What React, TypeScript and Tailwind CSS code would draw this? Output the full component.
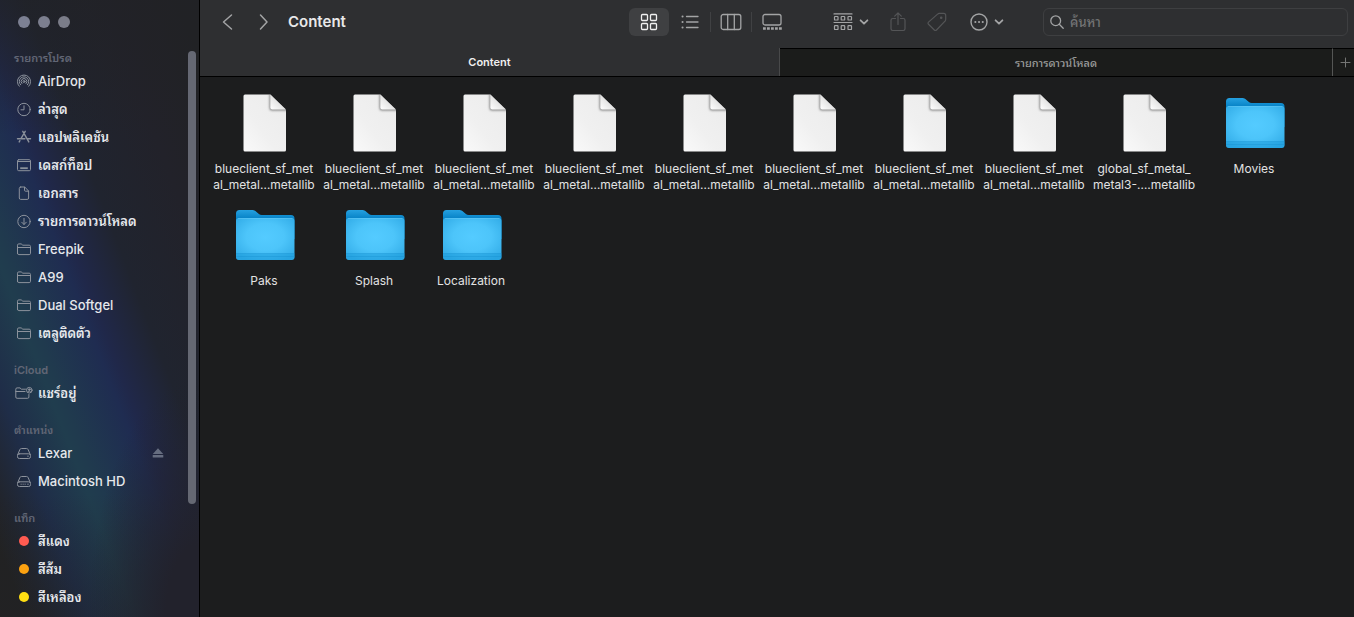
import type { ReactNode } from "react";

const stroke = {
  fill: "none",
  stroke: "currentColor",
  strokeLinecap: "round",
  strokeLinejoin: "round",
} as const;

function Glyph({ children }: { children: ReactNode }) {
  return (
    <svg width="16" height="16" viewBox="0 0 16 16" strokeWidth="1" {...stroke} aria-hidden="true">
      {children}
    </svg>
  );
}

const airdrop = (
  <Glyph>
    <path d="M3.2 13.2A6.6 6.6 0 1 1 12.8 13.2" />
    <path d="M4.6 11.8A4.7 4.7 0 1 1 11.4 11.8" />
    <path d="M5.9 10.5A2.9 2.9 0 1 1 10.1 10.5" />
    <circle cx="8" cy="8.5" r="1" />
  </Glyph>
);

const clock = (
  <Glyph>
    <circle cx="8" cy="8.5" r="6.2" />
    <path d="M8 4.8v4H5" />
  </Glyph>
);

const apps = (
  <Glyph>
    <g strokeWidth="1.4">
      <path d="M6.8 2.3l6 10.6M9.2 2.3L5.1 9.3M1.5 9.7h7.4M11.5 9.7h3M3.2 12.9l.7-1.2" />
    </g>
  </Glyph>
);

const desktop = (
  <Glyph>
    <rect x="1.5" y="2.7" width="13" height="11" rx="1.2" />
    <path d="M1.5 4.5h13" />
    <path d="M4.2 11.2h7.6" strokeWidth="1.8" strokeLinecap="butt" />
  </Glyph>
);

const documentIcon = (
  <Glyph>
    <path d="M4.7 2h4l3.9 4v7a1.4 1.4 0 0 1-1.4 1.4H4.7A1.4 1.4 0 0 1 3.3 13V3.4A1.4 1.4 0 0 1 4.7 2z" />
    <path d="M8.5 2.2v3a1 1 0 0 0 1 1h3" />
  </Glyph>
);

const downloads = (
  <Glyph>
    <circle cx="8" cy="8.5" r="6.2" />
    <path d="M8 5.3v6M5.7 9.2L8 11.5l2.3-2.3" />
  </Glyph>
);

const folder = (
  <Glyph>
    <path d="M1.5 12.3V4.2a1.3 1.3 0 0 1 1.3-1.3h2.4l1.6 1.3h6.4a1.3 1.3 0 0 1 1.3 1.3v6.8a1.3 1.3 0 0 1-1.3 1.3H2.8a1.3 1.3 0 0 1-1.3-1.3z" />
    <path d="M1.5 6.5h13" />
  </Glyph>
);

const shared = (
  <svg width="18" height="16" viewBox="0 0 18 16" strokeWidth="1" {...stroke} aria-hidden="true">
    <path d="M10.5 4.2H6.4L5 2.9H2.1A1.3 1.3 0 0 0 .8 4.2V12a1.3 1.3 0 0 0 1.3 1.3h10.5a1.3 1.3 0 0 0 1.3-1.3V9.5M.8 6.5H10" />
    <circle cx="14.3" cy="5.2" r="2.8" />
    <circle cx="14.3" cy="4.6" r=".8" fill="currentColor" />
    <path d="M12.9 7a1.5 1.5 0 0 1 2.8 0" />
  </svg>
);

const drive = (
  <Glyph>
    <path d="M1.7 9.7l2.1-5A1.8 1.8 0 0 1 5.5 3.5h5a1.8 1.8 0 0 1 1.7 1.2l2.1 5" />
    <rect x="1.5" y="8.8" width="13" height="4.7" rx="1.8" />
    <path d="M11.7 11.2h.6" />
  </Glyph>
);

const internalDrive = (
  <Glyph>
    <path d="M1.7 9.7l2.1-5A1.8 1.8 0 0 1 5.5 3.5h5a1.8 1.8 0 0 1 1.7 1.2l2.1 5" />
    <rect x="1.5" y="8.8" width="13" height="4.7" rx="1.8" />
    <path d="M5 11.2h.3M7 11.2h.3M9 11.2h.3M11.7 11.2h.6" />
  </Glyph>
);

type Entry = { label: string; icon: ReactNode; eject?: boolean };

const sections: { title: string; entries: Entry[] }[] = [
  {
    title: "รายการโปรด",
    entries: [
      { label: "AirDrop", icon: airdrop },
      { label: "ล่าสุด", icon: clock },
      { label: "แอปพลิเคชัน", icon: apps },
      { label: "เดสก์ท็อป", icon: desktop },
      { label: "เอกสาร", icon: documentIcon },
      { label: "รายการดาวน์โหลด", icon: downloads },
      { label: "Freepik", icon: folder },
      { label: "A99", icon: folder },
      { label: "Dual Softgel", icon: folder },
      { label: "เตลูติดตัว", icon: folder },
    ],
  },
  { title: "iCloud", entries: [{ label: "แชร์อยู่", icon: shared }] },
  {
    title: "ตำแหน่ง",
    entries: [
      { label: "Lexar", icon: drive, eject: true },
      { label: "Macintosh HD", icon: internalDrive },
    ],
  },
  {
    title: "แท็ก",
    entries: [
      { label: "สีแดง", icon: <span className="size-2.5 rounded-full bg-[#ff5b51]" /> },
      { label: "สีส้ม", icon: <span className="size-2.5 rounded-full bg-[#fca211]" /> },
      { label: "สีเหลือง", icon: <span className="size-2.5 rounded-full bg-[#ffdf12]" /> },
    ],
  },
];

function Sidebar() {
  return (
    <aside className="relative w-[200px] shrink-0 border-r border-black bg-[#22232a] bg-[radial-gradient(ellipse_110px_240px_at_100%_100%,#22222cff_30%,#22222c00_100%),linear-gradient(180deg,#212226aa_0%,#21222600_22%,#21222600_80%,#21222666_100%),linear-gradient(69deg,#222222_6%,#21252e_11%,#1f2d48_20%,#203d4e_31%,#203a4e_34%,#1f2c51_46%,#20284a_49%,#20242f_60%,#22222a_78%,#212224_95%)]">
      <div className="flex gap-2 px-[18px] pt-4 pb-[22px]">
        <button aria-label="Close" className="size-3 rounded-full bg-[#7c8093]" />
        <button aria-label="Minimize" className="size-3 rounded-full bg-[#7c7f8f]" />
        <button aria-label="Zoom" className="size-3 rounded-full bg-[#7b7d89]" />
      </div>

      <nav className="flex flex-col gap-4">
        {sections.map((section) => (
          <section key={section.title}>
            <h2 className="h-[17px] pl-3.5 text-[11px] leading-4 font-semibold text-[#616675]">
              {section.title}
            </h2>
            <ul className="-mb-px">
              {section.entries.map((entry) => (
                <li key={entry.label} className="flex h-7 items-center pr-[35px] pl-3.5">
                  <a
                    href="#"
                    lang={/[a-z]/i.test(entry.label) ? "en" : "th"}
                    className="flex flex-1 items-center gap-1 text-[13px] leading-5 font-medium whitespace-nowrap text-[#e6e8ec] [&:lang(th)]:font-semibold"
                  >
                    <span className="flex w-5 shrink-0 justify-center text-[#8c929c]">{entry.icon}</span>
                    {entry.label}
                  </a>
                  {entry.eject && (
                    <button aria-label="Eject" className="text-[#666d80]">
                      <svg width="12" height="12" viewBox="0 0 12 12" fill="currentColor" aria-hidden="true">
                        <path d="M6 1.3L11.2 7H.8z" />
                        <rect x=".7" y="8" width="10.6" height="2.5" rx=".5" />
                      </svg>
                    </button>
                  )}
                </li>
              ))}
            </ul>
          </section>
        ))}
      </nav>

      <div className="absolute top-[51px] right-[3px] h-[453px] w-2 rounded-full bg-[#656873]" />
    </aside>
  );
}

function Caret() {
  return (
    <svg width="10" height="8" viewBox="0 0 10 8" strokeWidth="1.8" {...stroke} aria-hidden="true">
      <path d="M1.6 2.3L5 5.7l3.4-3.4" />
    </svg>
  );
}

function Toolbar() {
  return (
    <header className="flex h-12 items-center bg-[#2e2f31] pr-1.5 pb-1 text-[#a3a4a5]">
      <div className="flex flex-1 items-center pl-5">
        <button aria-label="Back" className="flex w-4 justify-center">
          <svg width="12" height="18" viewBox="0 0 12 18" strokeWidth="1.5" {...stroke}>
            <path d="M9.5 2L1.5 9l8 7" />
          </svg>
        </button>
        <button aria-label="Forward" className="ml-5 flex w-4 justify-center">
          <svg width="12" height="18" viewBox="0 0 12 18" strokeWidth="1.5" {...stroke}>
            <path d="M2.5 2L9 9l-6.500 7" />
          </svg>
        </button>
        <h1 className="ml-4 text-[15px] leading-5 font-semibold text-[#e8e8e9]">Content</h1>
      </div>

      <div className="flex items-center">
        <button aria-label="Icons" className="flex h-7 w-10 items-center justify-center rounded-md bg-[#3f4042] text-[#f0f0f0]">
          <svg width="18" height="18" viewBox="0 0 18 18" strokeWidth="1.3" {...stroke}>
            <rect x="1.5" y="1.5" width="6" height="6" rx="1" />
            <rect x="10.5" y="1.5" width="6" height="6" rx="1" />
            <rect x="1.5" y="10.5" width="6" height="6" rx="1" />
            <rect x="10.5" y="10.5" width="6" height="6" rx="1" />
          </svg>
        </button>
        <span className="w-px" />
        <button aria-label="List" className="flex h-7 w-10 items-center justify-center">
          <svg width="18" height="16" viewBox="0 0 18 16" strokeWidth="1.3" {...stroke}>
            <path d="M5.5 2.5H17M5.5 8H17M5.5 13.5H17" />
            <path d="M1.5 2.5h.1M1.5 8h.1M1.5 13.5h.1" strokeWidth="2" />
          </svg>
        </button>
        <span className="h-5 w-px bg-[#404143]" />
        <button aria-label="Columns" className="flex h-7 w-10 items-center justify-center">
          <svg width="22" height="18" viewBox="0 0 22 18" strokeWidth="1.3" {...stroke}>
            <rect x="1.2" y="1.5" width="19.6" height="15" rx="2" />
            <path d="M7.7 1.5v15M14.3 1.5v15" />
          </svg>
        </button>
        <span className="h-5 w-px bg-[#404143]" />
        <button aria-label="Gallery" className="flex h-7 w-10 items-center justify-center">
          <svg width="20" height="18" viewBox="0 0 20 18" strokeWidth="1.3" {...stroke}>
            <rect x="1" y="1.5" width="18" height="10.5" rx="2" />
            <path d="M1 15.5h19" strokeWidth="2.5" strokeDasharray="2.8 1.2" strokeLinecap="butt" />
          </svg>
        </button>
      </div>

      <div className="flex items-center gap-[19px] pr-[35px] pl-[41px]">
        <button aria-label="Group" className="flex w-9 items-center justify-between">
          <svg width="20" height="18" viewBox="0 0 20 18" strokeWidth="1.2" {...stroke}>
            <path d="M1 .9h18M1 9.5h18" />
            <rect x="1.5" y="3.5" width="3.5" height="3.5" rx=".6" />
            <rect x="8.2" y="3.5" width="3.5" height="3.5" rx=".6" />
            <rect x="15" y="3.5" width="3.5" height="3.5" rx=".6" />
            <rect x="1.5" y="12.7" width="3.5" height="3.8" rx=".6" />
            <rect x="8.2" y="12.7" width="3.5" height="3.8" rx=".6" />
            <rect x="15" y="12.7" width="3.5" height="3.8" rx=".6" />
          </svg>
          <Caret />
        </button>
        <button aria-label="Share" className="flex w-5 justify-center text-[#545557]">
          <svg width="16" height="20" viewBox="0 0 16 20" strokeWidth="1.2" {...stroke}>
            <path d="M5.5 6.5H2.7A1.7 1.7 0 0 0 1 8.200v8.600a1.700 1.700 0 0 0 1.700 1.700h10.600a1.700 1.700 0 0 0 1.700-1.700V8.200a1.700 1.700 0 0 0-1.700-1.700h-2.800" />
            <path d="M8 12.500V1M4.700 4.100L8 .9l3.300 3.200" />
          </svg>
        </button>
        <button aria-label="Tags" className="flex w-5 justify-center text-[#545557]">
          <svg width="20" height="20" viewBox="0 0 20 20" strokeWidth="1.2" {...stroke}>
            <path d="M10.6 2.1a2.2 2.2 0 0 1 1.600-.7h4.500a2 2 0 0 1 2 2v4.200a2.200 2.200 0 0 1-.7 1.600L9.500 18a1.500 1.500 0 0 1-2.200 0L1.500 12.300a1.500 1.500 0 0 1 0-2.200z" />
            <circle cx="14.2" cy="5.8" r=".7" fill="currentColor" />
          </svg>
        </button>
        <button aria-label="More" className="flex w-[42px] items-center justify-center gap-1.5">
          <svg width="18" height="18" viewBox="0 0 18 18" strokeWidth="1.4" {...stroke}>
            <circle cx="9" cy="9" r="8" />
            <path d="M5.3 9h.1M9 9h.1M12.7 9h.1" strokeWidth="2" />
          </svg>
          <Caret />
        </button>
      </div>

      <label className="flex h-7 w-[305px] items-center gap-1.5 rounded-md border border-[#3e3f41] px-1.5">
        <svg width="14" height="14" viewBox="0 0 14 14" strokeWidth="1.3" {...stroke} aria-hidden="true">
          <circle cx="5.7" cy="5.7" r="4.9" />
          <path d="M9.3 9.3l3.9 3.9" />
        </svg>
        <input
          type="search"
          aria-label="ค้นหา"
          placeholder="ค้นหา"
          className="min-w-0 flex-1 bg-transparent text-[13px] leading-5 font-medium outline-none placeholder:text-[#737475]"
        />
      </label>
    </header>
  );
}

function Tabs() {
  return (
    <div className="grid h-[29px] grid-cols-[580fr_553fr_21px] border-b border-black bg-[#2e2f31] text-[11px] leading-4" role="tablist">
      <button role="tab" aria-selected="true" className="border-r border-[#48494a] font-semibold text-[#efefef]">
        Content
      </button>
      <button role="tab" aria-selected="false" className="border-t border-r border-t-black border-r-[#555655] bg-[#1b1c1b] font-medium text-[#9a9b9a]">
        รายการดาวน์โหลด
      </button>
      <button aria-label="New tab" className="flex items-center justify-end border-t border-black bg-[#1b1c1b] pr-[3px] text-[#757675]">
        <svg width="11" height="11" viewBox="0 0 11 11" strokeWidth="1" {...stroke}>
          <path d="M5.5 1v9M1 5.5h9" />
        </svg>
      </button>
    </div>
  );
}

function FileArt() {
  return (
    <svg width="46" height="60" viewBox="0 0 46 60" aria-hidden="true">
      <g clipPath="url(#page)">
        <rect width="46" height="60" fill="url(#paper)" />
        <path d="M27.5 0v15.5a2 2 0 0 0 2 2H46L28 0z" fill="#555555" opacity=".7" filter="url(#soft)" />
      </g>
      <path d="M28.3 1.5v13a2 2 0 0 0 2 2h13.7z" fill="url(#fold)" />
    </svg>
  );
}

function FolderArt() {
  return (
    <svg width="60" height="52" viewBox="0 0 60 52" aria-hidden="true">
      <path d="M1 4.5A3.5 3.5 0 0 1 4.500 1h12.700a5 5 0 0 1 3.200 1.100l3.200 2.700A5 5 0 0 0 26.800 6h29.200A3.500 3.500 0 0 1 59.500 9.500V30H1z" fill="url(#folderBack)" />
      <rect x="1" y="9" width="58.5" height="42" rx="3" fill="url(#folderFront)" />
      <path d="M3 9.5h54.5" stroke="#7bd4fb" strokeWidth="1" opacity=".35" />
      <path d="M1 44.5h58.5V48a3 3 0 0 1-3 3H4a3 3 0 0 1-3-3z" fill="#189ad9" opacity=".45" />
      <path d="M1 44.5h58.5M1 47.5h58.5" stroke="#1189c9" strokeWidth=".5" opacity=".6" />
    </svg>
  );
}

const blueclient = ["blueclient_sf_met", "al_metal…metallib"];

type Item = { kind: "file" | "folder"; lines: string[]; width?: string };

const items: Item[] = [
  ...Array.from({ length: 8 }, (): Item => ({ kind: "file", lines: blueclient })),
  { kind: "file", lines: ["global_sf_metal_", "metal3-….metallib"] },
  { kind: "folder", lines: ["Movies"] },
  { kind: "folder", lines: ["Paks"] },
  { kind: "folder", lines: ["Splash"] },
  { kind: "folder", lines: ["Localization"], width: "w-[84px]" },
];

export default function App() {
  return (
    <div className="flex min-h-screen bg-[#1c1d1e] font-['Inter','Noto_Sans_Thai_Looped','Loma','Noto_Sans',sans-serif]">
      <svg className="absolute size-0" aria-hidden="true">
        <defs>
          <clipPath id="page">
            <path d="M3 1.5h25.300L44 17.300V57a1.500 1.500 0 0 1-1.500 1.500H3A1.500 1.500 0 0 1 1.500 57V3A1.500 1.500 0 0 1 3 1.500z" />
          </clipPath>
          <filter id="soft">
            <feGaussianBlur stdDeviation="1.3" />
          </filter>
          <linearGradient id="paper" x1="1" y1="0" x2="0" y2="1">
            <stop offset="0" stopColor="#ebebeb" />
            <stop offset=".6" stopColor="#f0f0f0" />
            <stop offset="1" stopColor="#fafafa" />
          </linearGradient>
          <linearGradient id="fold" x1="0" y1="1" x2=".6" y2=".4">
            <stop offset="0" stopColor="#ffffff" />
            <stop offset="1" stopColor="#dedede" />
          </linearGradient>
          <linearGradient id="folderBack" x1="0" y1="0" x2="0" y2="1">
            <stop offset="0" stopColor="#25a0e0" />
            <stop offset=".3" stopColor="#0682c6" />
          </linearGradient>
          <radialGradient id="folderFront" cx=".5" cy=".45" r=".65">
            <stop offset="0" stopColor="#54cbff" />
            <stop offset=".5" stopColor="#4dc5fa" />
            <stop offset="1" stopColor="#33ade8" />
          </radialGradient>
        </defs>
      </svg>

      <Sidebar />

      <main className="min-w-0 flex-1">
        <div className="-mb-px">
          <Toolbar />
        </div>
        <div className="pt-px">
          <Tabs />
        </div>
        <ul className="flex flex-wrap pt-3 pl-[9px]">
          {items.map((item, i) => (
            <li key={i} className={item.width ?? "w-[110px]"}>
              <button className="flex h-28 w-full flex-col items-center">
                <span className="flex h-[72px] items-center pb-1 pl-0.5">
                  {item.kind === "file" ? <FileArt /> : <FolderArt />}
                </span>
                <span className="text-[12px] leading-4 whitespace-nowrap text-[#e3e3e3]">
                  {item.lines.map((line) => (
                    <span key={line} className="block">
                      {line}
                    </span>
                  ))}
                </span>
              </button>
            </li>
          ))}
        </ul>
      </main>
    </div>
  );
}
